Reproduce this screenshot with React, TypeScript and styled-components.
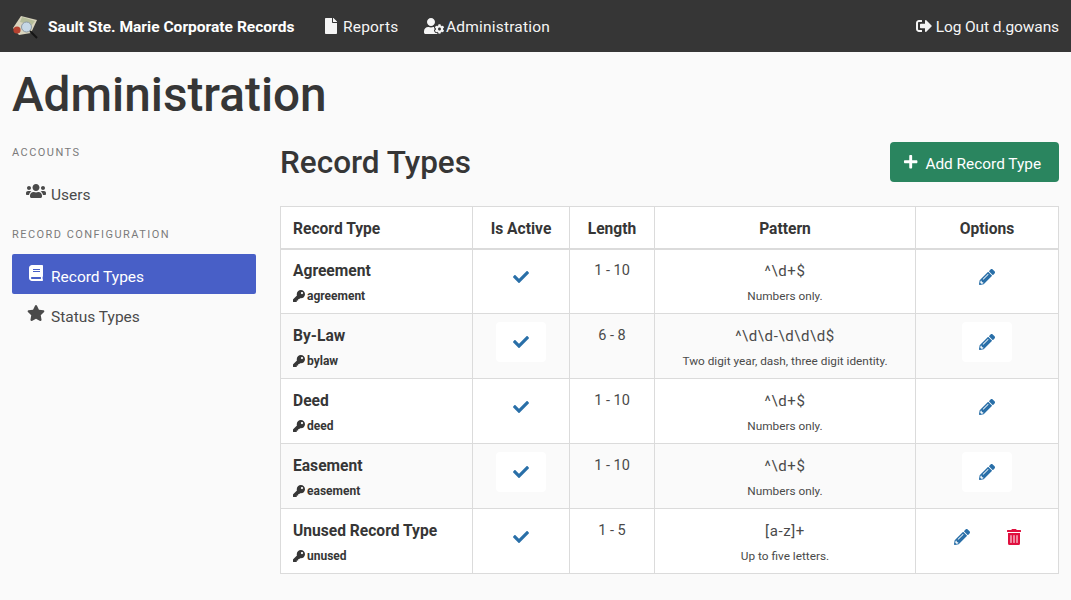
import React from "react";
import styled, { createGlobalStyle } from "styled-components";
import {
  FaBook,
  FaCheck,
  FaFile,
  FaKey,
  FaPencilAlt,
  FaPlus,
  FaSignOutAlt,
  FaStar,
  FaTrashAlt,
  FaUserCog,
  FaUsers,
} from "react-icons/fa";

const fontStack = `Roboto, "Liberation Sans", sans-serif`;

const GlobalStyle = createGlobalStyle`
  html, body {
    margin: 0;
    padding: 0;
    background: #fafafa;
    color: #363636;
    font-family: ${fontStack};
    font-size: 16px;
    overflow: hidden;
  }
  * { box-sizing: border-box; }
`;

const Navbar = styled.nav`
  height: 52px;
  background: #363636;
  color: #fff;
  display: flex;
  align-items: center;
  padding: 0 12px;
`;

const Brand = styled.div`
  display: flex;
  align-items: center;
  gap: 10px;
  font-size: 15.55px;
  font-weight: 700;
  width: 311px;
  white-space: nowrap;
`;

const NudgedText = styled.span`
  padding-top: 2px;
`;

const NavItem = styled.div<{ $width?: number; $gap: number; $iconSize: number; $spacing?: number }>`
  display: flex;
  align-items: center;
  gap: ${(p) => p.$gap}px;
  font-size: 15.5px;
  letter-spacing: ${(p) => p.$spacing ?? 0.2}px;
  color: #f5f5f5;
  white-space: nowrap;
  width: ${(p) => (p.$width ? `${p.$width}px` : "auto")};
  svg {
    font-size: ${(p) => p.$iconSize}px;
  }
`;

const Spacer = styled.div`
  flex: 1;
`;

const PageTitle = styled.h1`
  margin: 0;
  padding: 14px 12px 0;
  height: 93px;
  font-size: 47.7px;
  line-height: 58px;
  font-weight: 500;
  color: #363636;
`;

const Columns = styled.div`
  display: flex;
  padding: 0 12px;
  gap: 24px;
`;

const Sidebar = styled.aside`
  width: 244px;
  flex: none;
`;

const MenuLabel = styled.p`
  margin: 0;
  height: 14px;
  line-height: 16px;
  font-size: 11px;
  letter-spacing: 1.45px;
  text-transform: uppercase;
  color: #7a7a7a;
`;

const MenuList = styled.div`
  margin: 13px 0 15px;
`;

const MenuItem = styled.div<{ $active?: boolean }>`
  height: 40px;
  border-radius: 2px;
  display: flex;
  align-items: center;
  padding: 5px 0 0 12px;
  font-size: 15.5px;
  background: ${(p) => (p.$active ? "#485fc7" : "transparent")};
  color: ${(p) => (p.$active ? "#fff" : "#4a4a4a")};
`;

const MenuIcon = styled.span<{ $size: number }>`
  width: 24px;
  display: flex;
  justify-content: center;
  font-size: ${(p) => p.$size}px;
  margin-right: 3px;
  position: relative;
  top: -4px;
`;

const Main = styled.main`
  flex: 1;
  min-width: 0;
  margin-top: -15px;
`;

const MainHeader = styled.div`
  height: 64px;
  margin-bottom: 12px;
  display: flex;
  align-items: center;
  justify-content: space-between;
`;

const MainTitle = styled.h2`
  margin: 0;
  font-size: 31.5px;
  font-weight: 500;
  color: #363636;
`;

const AddButton = styled.div`
  width: 169px;
  height: 40px;
  border-radius: 4px;
  background: #2a855f;
  color: #fff;
  display: flex;
  align-items: center;
  padding-left: 13px;
  gap: 7px;
  font-size: 15.4px;
  span {
    padding-top: 3px;
  }
`;

const Table = styled.table`
  width: 778px;
  border-collapse: collapse;
  table-layout: fixed;
  background: #fff;
`;

const HeadCell = styled.th<{ $left?: boolean; $width: number }>`
  width: ${(p) => p.$width}px;
  height: 42px;
  padding: 3px 12px 0;
  border: 1px solid #dbdbdb;
  border-bottom-width: 2px;
  font-size: 15.6px;
  font-weight: 700;
  color: #363636;
  text-align: ${(p) => (p.$left ? "left" : "center")};
`;

const Row = styled.tr<{ $striped: boolean }>`
  height: 65px;
  background: ${(p) => (p.$striped ? "#fafafa" : "#fff")};
`;

const Cell = styled.td<{ $left?: boolean }>`
  padding: 1px 12px 0;
  border: 1px solid #dbdbdb;
  text-align: ${(p) => (p.$left ? "left" : "center")};
  vertical-align: top;
  tbody tr:first-child & {
    padding-top: 0;
  }
`;

const RecordName = styled.div`
  margin-top: 11px;
  line-height: 20px;
  font-size: 15.6px;
  font-weight: 700;
  color: #363636;
`;

const RecordKey = styled.div`
  margin-top: 8px;
  display: flex;
  align-items: center;
  gap: 2px;
  font-size: 12px;
  font-weight: 700;
  line-height: 14px;
  color: #363636;
  svg {
    font-size: 12px;
  }
`;

const LengthText = styled.div`
  margin-top: 11px;
  line-height: 20px;
  font-size: 14.5px;
  color: #4a4a4a;
`;

const PatternText = styled.div`
  margin-top: 11px;
  line-height: 20px;
  font-size: 15px;
  letter-spacing: 0.6px;
  color: #4a4a4a;
`;

const Hint = styled.div`
  margin-top: 8px;
  font-size: 11.8px;
  line-height: 14px;
  color: #4a4a4a;
  white-space: nowrap;
`;

const ButtonRow = styled.div<{ $pair?: boolean }>`
  display: flex;
  justify-content: center;
  gap: 2px;
  margin-top: 7px;
  padding-left: ${(p) => (p.$pair ? "2px" : "0")};
`;

const IconButton = styled.div<{ $filled: boolean; $color: string }>`
  width: 50px;
  height: 40px;
  border-radius: 4px;
  display: flex;
  align-items: center;
  justify-content: center;
  font-size: 16px;
  background: ${(p) => (p.$filled ? "#fff" : "transparent")};
  color: ${(p) => p.$color};
`;

const Logo = () => (
  <svg width="26" height="26" viewBox="0 0 26 26">
    <path d="M1 15 L9 3 L25 7 L19 20 L7 22 Z" fill="#d9d4bd" />
    <path d="M10 4 L23 8 L20 12 L8 9 Z" fill="#b5bd9a" />
    <circle cx="5" cy="17" r="3.6" fill="#b5412f" />
    <line x1="18" y1="18" x2="25" y2="25" stroke="#151515" strokeWidth="2" />
    <circle cx="14.5" cy="14" r="5" fill="#c6d8e6" stroke="#8d9aa3" />
  </svg>
);

const records = [
  { name: "Agreement", key: "agreement", length: "1 - 10", pattern: "^\\d+$", hint: "Numbers only." },
  { name: "By-Law", key: "bylaw", length: "6 - 8", pattern: "^\\d\\d-\\d\\d\\d$", hint: "Two digit year, dash, three digit identity." },
  { name: "Deed", key: "deed", length: "1 - 10", pattern: "^\\d+$", hint: "Numbers only." },
  { name: "Easement", key: "easement", length: "1 - 10", pattern: "^\\d+$", hint: "Numbers only." },
  { name: "Unused Record Type", key: "unused", length: "1 - 5", pattern: "[a-z]+", hint: "Up to five letters.", canDelete: true },
];

export default function App() {
  return (
    <>
      <GlobalStyle />
      <Navbar>
        <Brand>
          <Logo />
          <NudgedText>Sault Ste. Marie Corporate Records</NudgedText>
        </Brand>
        <NavItem $width={101} $gap={4} $iconSize={16}>
          <FaFile />
          <NudgedText>Reports</NudgedText>
        </NavItem>
        <NavItem $gap={2} $iconSize={20}>
          <FaUserCog />
          <NudgedText>Administration</NudgedText>
        </NavItem>
        <Spacer />
        <NavItem $gap={4} $iconSize={16} $spacing={-0.1}>
          <FaSignOutAlt />
          <NudgedText>Log Out d.gowans</NudgedText>
        </NavItem>
      </Navbar>
      <PageTitle>Administration</PageTitle>
      <Columns>
        <Sidebar>
          <MenuLabel>Accounts</MenuLabel>
          <MenuList>
            <MenuItem>
              <MenuIcon $size={20}><FaUsers /></MenuIcon>
              Users
            </MenuItem>
          </MenuList>
          <MenuLabel>Record Configuration</MenuLabel>
          <MenuList>
            <MenuItem $active>
              <MenuIcon $size={16}><FaBook /></MenuIcon>
              Record Types
            </MenuItem>
            <MenuItem>
              <MenuIcon $size={18}><FaStar /></MenuIcon>
              Status Types
            </MenuItem>
          </MenuList>
        </Sidebar>
        <Main>
          <MainHeader>
            <MainTitle>Record Types</MainTitle>
            <AddButton>
              <FaPlus />
              <span>Add Record Type</span>
            </AddButton>
          </MainHeader>
          <Table>
            <thead>
              <tr>
                <HeadCell $left $width={192}>Record Type</HeadCell>
                <HeadCell $width={97}>Is Active</HeadCell>
                <HeadCell $width={85}>Length</HeadCell>
                <HeadCell $width={261}>Pattern</HeadCell>
                <HeadCell $width={143}>Options</HeadCell>
              </tr>
            </thead>
            <tbody>
              {records.map((r, i) => {
                const striped = i % 2 === 1;
                return (
                  <Row key={r.key} $striped={striped}>
                    <Cell $left>
                      <RecordName>{r.name}</RecordName>
                      <RecordKey><FaKey />{r.key}</RecordKey>
                    </Cell>
                    <Cell>
                      <ButtonRow>
                        <IconButton $filled={striped} $color="#296fa8"><FaCheck /></IconButton>
                      </ButtonRow>
                    </Cell>
                    <Cell><LengthText>{r.length}</LengthText></Cell>
                    <Cell>
                      <PatternText>{r.pattern}</PatternText>
                      <Hint>{r.hint}</Hint>
                    </Cell>
                    <Cell>
                      <ButtonRow $pair={r.canDelete}>
                        <IconButton $filled={striped} $color="#296fa8"><FaPencilAlt /></IconButton>
                        {r.canDelete && (
                          <IconButton $filled={striped} $color="#e0103f"><FaTrashAlt /></IconButton>
                        )}
                      </ButtonRow>
                    </Cell>
                  </Row>
                );
              })}
            </tbody>
          </Table>
        </Main>
      </Columns>
    </>
  );
}
